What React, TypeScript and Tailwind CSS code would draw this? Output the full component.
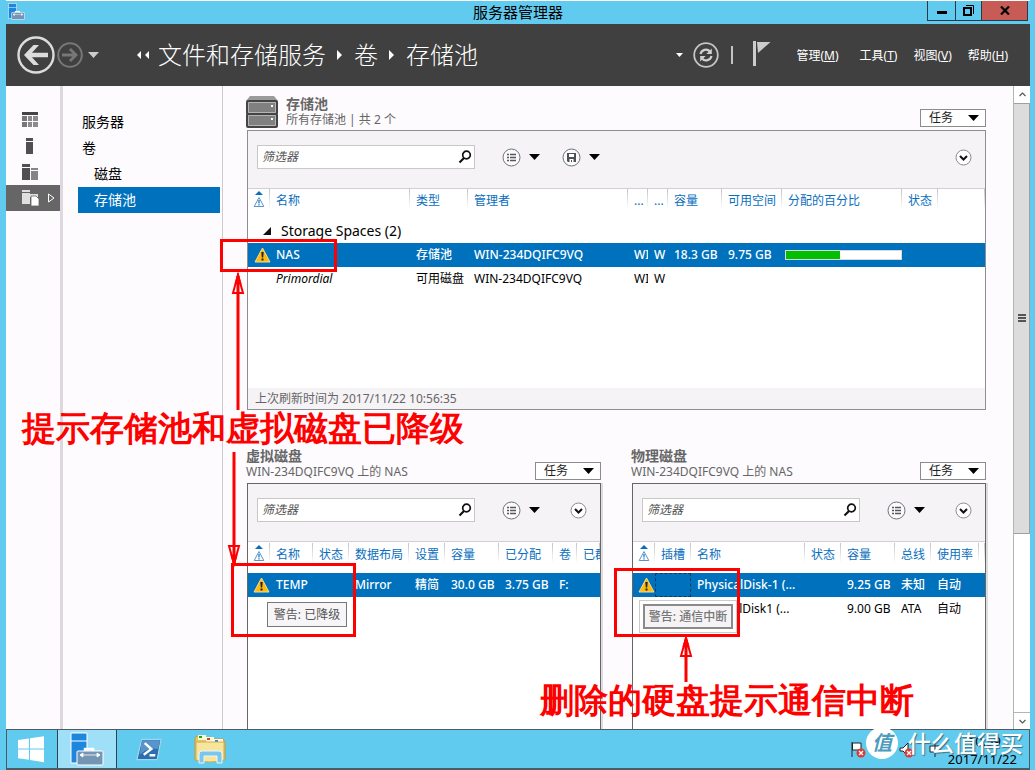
import type { ReactNode } from "react";

const thLine =
  "relative h-[30px] overflow-hidden bg-linear-to-b from-[#c4c4c4] to-white bg-[length:1px_20px] bg-right-top bg-no-repeat pl-[6px] pt-1 text-left align-top font-normal whitespace-nowrap text-[#0a6ebd]";

const Caret = ({ className = "text-black" }: { className?: string }) => (
  <svg width="11" height="6" viewBox="0 0 11 6" className={className} aria-hidden="true">
    <path d="M0 0h11L5.5 6z" fill="currentColor" />
  </svg>
);

const Warning = () => (
  <svg width="17" height="16" viewBox="0 0 17 16" aria-label="警告" className="block">
    <path d="M8.5 1 16 15H1z" fill="#fdb913" stroke="#f8d98a" strokeLinejoin="round" />
    <path d="M7.3 5h2.4l-.5 5.5H7.8zM7.5 11.6h2v2h-2z" fill="#222" />
  </svg>
);

const SortWarning = () => (
  <svg width="12" height="17" viewBox="0 0 12 17" aria-label="状态排序" className="block">
    <path d="M6 0 10 4H2z" fill="#0a6ebd" />
    <path d="M6 6.5 10.8 15.5H1.2z" fill="none" stroke="#5b93c9" />
    <path d="M6 9v3.5M6 13.3v1.2" stroke="#0a6ebd" strokeWidth="1.2" />
  </svg>
);

const ServerIcon = ({ size }: { size: number }) => (
  <svg width={size} height={size} viewBox="0 0 34 34" aria-hidden="true">
    <path d="M1 1h16v30H1z" fill="#1c87dd" stroke="#fff" />
    <path d="M1 9h16" stroke="#fff" />
    <path d="M15 20v-3h8v3" fill="none" stroke="#fff" strokeWidth="2.5" />
    <rect x="7" y="19" width="26" height="14" rx="1" fill="#7495b3" stroke="#fff" />
    <path d="M10 23h20M10 23l3-2v4zM30 23l-3-2v4z" stroke="#fff" fill="#fff" strokeWidth=".8" />
  </svg>
);

const TaskButton = () => (
  <button className="flex h-[18px] w-[66px] items-center justify-between border border-[#8c8c8c] bg-white pr-[6px] pl-2 text-xs text-[#222]">
    任务
    <Caret />
  </button>
);

function Toolbar({ id, save = false }: { id: string; save?: boolean }) {
  return (
    <div className="flex h-[57px] items-start bg-[#f6f3f7] pt-[14px] pr-[13px] pl-[9px]">
      <div className="flex h-6 w-[218px] items-center border border-[#c8c8c8] bg-white pr-[2px] pl-1">
        <input
          id={id}
          aria-label="筛选器"
          placeholder="筛选器"
          className="min-w-0 flex-1 bg-transparent text-xs italic outline-none placeholder:text-[#555]"
        />
        <svg width="14" height="14" viewBox="0 0 14 14" aria-hidden="true">
          <circle cx="8.5" cy="5" r="3.8" fill="none" stroke="#111" strokeWidth="1.7" />
          <path d="M6 8 1.5 12.5" stroke="#111" strokeWidth="2.2" />
        </svg>
      </div>
      <button aria-label="列表选项" className="ml-[27px] flex h-6 items-center gap-2">
        <svg width="19" height="19" viewBox="0 0 19 19">
          <circle cx="9.5" cy="9.5" r="8.5" fill="#fbfafc" stroke="#6f7174" />
          <path d="M5 6.5h2M5 9.5h2M5 12.5h2M8 6.5h6M8 9.5h6M8 12.5h6" stroke="#55585c" strokeWidth="1.7" />
        </svg>
        <Caret />
      </button>
      {save && (
        <button aria-label="保存查询" className="ml-[22px] flex h-6 items-center gap-2">
          <svg width="19" height="19" viewBox="0 0 19 19">
            <circle cx="9.5" cy="9.5" r="8.5" fill="#fbfafc" stroke="#6f7174" />
            <path d="M5 5h9v9H6l-1-1z" fill="#4d5054" />
            <path d="M7 6h5v3H7zM7.5 11h4v3h-4z" fill="#fff" />
            <path d="M9 12h1v2H9z" fill="#4d5054" />
          </svg>
          <Caret />
        </button>
      )}
      <button aria-label="展开" className="ml-auto flex h-6 items-center">
        <svg width="17" height="17" viewBox="0 0 17 17">
          <circle cx="8.5" cy="8.5" r="7.5" fill="#fff" stroke="#8a8a8a" />
          <path d="m5 7 3.5 3.5L12 7" fill="none" stroke="#111" strokeWidth="2" />
        </svg>
      </button>
    </div>
  );
}

function Columns({ heads }: { heads: string[] }) {
  return (
    <thead>
      <tr>
        <th className="h-[30px] bg-linear-to-b from-[#c4c4c4] to-white bg-[length:1px_20px] bg-right-top bg-no-repeat pt-[2px] pl-[5px] align-top">
          <SortWarning />
        </th>
        {heads.map((h, i) => (
          <th key={i} className={thLine}>
            {h}
          </th>
        ))}
      </tr>
    </thead>
  );
}

const Cell = ({ children }: { children?: ReactNode }) => (
  <td className="h-6 overflow-hidden p-0 pl-[6px] whitespace-nowrap">{children}</td>
);

const Widths = ({ list }: { list: string[] }) => (
  <colgroup>
    {list.map((w, i) => (
      <col key={i} className={w} />
    ))}
  </colgroup>
);

function SectionTitle({ title, sub }: { title: string; sub: string }) {
  return (
    <div className="min-w-0 flex-1 text-[#666]">
      <h2 className="text-sm leading-4 font-bold">{title}</h2>
      <p className="text-xs leading-4 whitespace-nowrap">{sub}</p>
    </div>
  );
}

function PoolPanel() {
  return (
    <section>
      <div className="flex h-[34px] items-start">
        <svg width="32" height="34" viewBox="0 0 32 34" className="mr-2" aria-hidden="true">
          <path d="M4 0h24l4 5H0z" fill="#9b9b9b" />
          <rect x="1" y="5" width="30" height="13" rx="1" fill="#808080" stroke="#444" strokeWidth="2" />
          <rect x="1" y="18" width="30" height="13" rx="1" fill="#808080" stroke="#444" strokeWidth="2" />
          <path d="M2.5 6.5h27v10h-27zM2.5 19.5h27v10h-27z" fill="none" stroke="#b5b5b5" />
          <path d="M25 9h2v2h-2zM25 22h2v2h-2z" fill="#fff" />
        </svg>
        <SectionTitle title="存储池" sub="所有存储池 | 共 2 个" />
        <div className="self-end pb-[3px]">
          <TaskButton />
        </div>
      </div>
      <div className="ml-px border border-[#8e8e90] bg-white">
        <Toolbar id="pool-filter" save />
        <div className="h-[200px] border-t border-[#d0d0d0]">
          <table className="w-full table-fixed border-collapse text-xs">
            <Widths
              list={["w-[22px]", "w-[140px]", "w-[58px]", "w-[160px]", "w-[20px]", "w-[20px]", "w-[54px]", "w-[60px]", "w-[120px]", "w-[36px]", ""]}
            />
            <Columns heads={["名称", "类型", "管理者", "...", "...", "容量", "可用空间", "分配的百分比", "状态", ""]} />
            <tbody>
              <tr>
                <td colSpan={11} className="h-6 p-0 text-sm">
                  <div className="flex items-center gap-[10px] pl-[15px]">
                    <svg width="8" height="8" viewBox="0 0 8 8" aria-hidden="true">
                      <path d="M8 0v8H0z" fill="#111" />
                    </svg>
                    Storage Spaces (2)
                  </div>
                </td>
              </tr>
              <tr className="bg-[#0071bd] font-medium text-white">
                <td className="p-0 pl-[6px]">
                  <Warning />
                </td>
                <Cell>NAS</Cell>
                <Cell>存储池</Cell>
                <Cell>WIN-234DQIFC9VQ</Cell>
                <Cell>WI</Cell>
                <Cell>W</Cell>
                <Cell>18.3 GB</Cell>
                <Cell>9.75 GB</Cell>
                <td className="p-0 pl-[3px]">
                  <div role="progressbar" aria-label="分配的百分比" aria-valuenow={47} className="h-[10px] border border-[#d8d8d8] bg-white">
                    <div className="h-full bg-[#00bf00]" style={{ width: "47%" }} />
                  </div>
                </td>
                <Cell />
                <Cell />
              </tr>
              <tr>
                <Cell />
                <Cell>
                  <i>Primordial</i>
                </Cell>
                <Cell>可用磁盘</Cell>
                <Cell>WIN-234DQIFC9VQ</Cell>
                <Cell>WI</Cell>
                <Cell>W</Cell>
              </tr>
            </tbody>
          </table>
        </div>
        <p className="h-[21px] bg-[#f6f3f7] pl-[7px] text-xs leading-[22px] text-[#666]">上次刷新时间为 2017/11/22 10:56:35</p>
      </div>
    </section>
  );
}

function DiskPanel({ title, id, children }: { title: string; id: string; children: ReactNode }) {
  return (
    <section className="flex min-w-0 flex-col">
      <div className="flex items-end">
        <div className="-ml-px flex-1">
          <SectionTitle title={title} sub="WIN-234DQIFC9VQ 上的 NAS" />
        </div>
        <TaskButton />
      </div>
      <div className="mt-[3px] flex-1 border border-b-0 border-[#666] bg-white shadow-[2px_0_0_#ddd]">
        <Toolbar id={id} />
        <div className="relative border-t border-[#d0d0d0]">{children}</div>
      </div>
    </section>
  );
}

function VirtualDisks() {
  return (
    <DiskPanel title="虚拟磁盘" id="virtual-filter">
      <table className="mt-px w-full table-fixed border-collapse text-xs">
        <Widths list={["w-[22px]", "w-[43px]", "w-[36px]", "w-[60px]", "w-[36px]", "w-[54px]", "w-[54px]", "w-[24px]", ""]} />
        <Columns heads={["名称", "状态", "数据布局", "设置", "容量", "已分配", "卷", "已群集"]} />
        <tbody>
          <tr className="bg-[#0071bd] font-medium text-white">
            <td className="p-0 pl-[5px]">
              <Warning />
            </td>
            <Cell>TEMP</Cell>
            <Cell />
            <Cell>Mirror</Cell>
            <Cell>精简</Cell>
            <Cell>30.0 GB</Cell>
            <Cell>3.75 GB</Cell>
            <Cell>F:</Cell>
            <Cell />
          </tr>
        </tbody>
      </table>
      <div role="tooltip" className="absolute top-[60px] left-[19px] flex h-[25px] w-20 items-center justify-center border border-[#777] bg-[#f8f5f9] text-xs whitespace-nowrap text-[#555]">
        警告: 已降级
      </div>
    </DiskPanel>
  );
}

function PhysicalDisks() {
  return (
    <DiskPanel title="物理磁盘" id="physical-filter">
      <table className="mt-px w-full table-fixed border-collapse text-xs">
        <Widths list={["w-[22px]", "w-[36px]", "w-[114px]", "w-[36px]", "w-[54px]", "w-[36px]", "w-[48px]", ""]} />
        <Columns heads={["插槽", "名称", "状态", "容量", "总线", "使用率", ""]} />
        <tbody>
          <tr className="bg-[#0071bd] font-medium text-white">
            <td className="p-0 pl-[5px]">
              <Warning />
            </td>
            <td className="p-0">
              <div className="h-6 border border-dashed border-[#163a5c]" />
            </td>
            <Cell>PhysicalDisk-1 (...</Cell>
            <Cell />
            <Cell>9.25 GB</Cell>
            <Cell>未知</Cell>
            <Cell>自动</Cell>
            <Cell />
          </tr>
          <tr>
            <Cell />
            <Cell />
            <Cell>PhysicalDisk1 (...</Cell>
            <Cell />
            <Cell>9.00 GB</Cell>
            <Cell>ATA</Cell>
            <Cell>自动</Cell>
            <Cell />
          </tr>
        </tbody>
      </table>
      <div role="tooltip" className="absolute top-[58px] left-[6px] border border-[#ccc] bg-white p-[3px]">
        <div className="flex h-[25px] w-[90px] items-center justify-center border-2 border-[#8a8a8a] bg-[#f5f3f6] text-xs font-medium whitespace-nowrap text-[#777]">
          警告: 通信中断
        </div>
      </div>
    </DiskPanel>
  );
}

function TitleBar() {
  return (
    <div className="relative flex h-6 shrink-0 items-start justify-end border-t border-white">
      <div className="absolute top-[2px] left-[2px]">
        <ServerIcon size={17} />
      </div>
      <h1 className="absolute inset-x-0 text-center text-[15px] leading-[22px] text-black">服务器管理器</h1>
      <div className="relative mr-[2px] flex h-5 border border-t-0 border-[#2b3a42] text-black">
        <button aria-label="最小化" className="flex w-7 items-center justify-center border-r border-[#2b3a42]">
          <span className="mt-1 h-[3px] w-[10px] bg-black" />
        </button>
        <button aria-label="还原" className="flex w-[26px] items-center justify-center border-r border-[#2b3a42]">
          <svg width="11" height="11" viewBox="0 0 11 11">
            <path d="M3 .5h7.5V9" fill="none" stroke="#000" />
            <path d="M1 3h7v7H1z" fill="none" stroke="#000" strokeWidth="2" />
          </svg>
        </button>
        <button aria-label="关闭" className="flex w-[45px] items-center justify-center bg-[#c75b55]">
          <svg width="10" height="9" viewBox="0 0 10 9">
            <path d="m1 .5 8 8M9 .5l-8 8" stroke="#000" strokeWidth="2.2" />
          </svg>
        </button>
      </div>
    </div>
  );
}

const menus = [
  { text: "管理", key: "M", gap: "" },
  { text: "工具", key: "T", gap: "ml-[21px]" },
  { text: "视图", key: "V", gap: "ml-4" },
  { text: "帮助", key: "H", gap: "ml-4" },
];

const Chevron = () => (
  <svg width="5" height="10" viewBox="0 0 5 10" aria-hidden="true">
    <path d="M0 0v10l5-5z" fill="#fff" />
  </svg>
);

function Header() {
  return (
    <header className="flex h-[62px] shrink-0 items-center bg-[#404040] pr-[22px] pl-[11px] text-white">
      <button aria-label="后退">
        <svg width="38" height="38" viewBox="0 0 38 38">
          <circle cx="19" cy="19" r="17.5" fill="none" stroke="#dcdcdc" strokeWidth="2.4" />
          <path d="M31 19H10" fill="none" stroke="#dcdcdc" strokeWidth="4.5" />
          <path d="M22 9h-5.500L7 19l9.500 10H22l-9-10z" fill="#dcdcdc" />
        </svg>
      </button>
      <button aria-label="前进" className="ml-[2px]">
        <svg width="26" height="26" viewBox="0 0 26 26">
          <circle cx="13" cy="13" r="11.8" fill="none" stroke="#777" strokeWidth="2" />
          <path d="M5 13h14M13 7l6 6-6 6" fill="none" stroke="#777" strokeWidth="2.8" />
        </svg>
      </button>
      <button aria-label="历史记录" className="ml-[5px]">
        <Caret className="text-[#ccc]" />
      </button>
      <nav aria-label="路径" className="ml-[37px] flex items-center text-2xl font-light whitespace-nowrap">
        <svg width="14" height="8" viewBox="0 0 14 8" aria-hidden="true">
          <path d="M5 0v8L1 4zM13 0v8L9 4z" fill="#fff" />
        </svg>
        <a href="#files" className="ml-2">文件和存储服务</a>
        <span className="mr-3 ml-[11px]"><Chevron /></span>
        <a href="#volumes">卷</a>
        <span className="mr-3 ml-[11px]"><Chevron /></span>
        <a href="#pools">存储池</a>
      </nav>
      <div className="ml-auto flex items-center">
        <svg width="7" height="4" viewBox="0 0 7 4" aria-hidden="true">
          <path d="M0 0h7L3.5 4z" fill="#fff" />
        </svg>
        <button aria-label="刷新" className="ml-[10px]">
          <svg width="26" height="26" viewBox="0 0 26 26">
            <circle cx="13" cy="13" r="11.8" fill="none" stroke="#c4c4c4" strokeWidth="1.8" />
            <path d="M7.5 12a5.5 5.5 0 0 1 9.5-2.5M18.5 14a5.5 5.5 0 0 1-9.5 2.5" fill="none" stroke="#d0d0d0" strokeWidth="2.2" />
            <path d="M18.8 6.500V12h-5.500zM7.200 19.500V14h5.500z" fill="#d0d0d0" />
          </svg>
        </button>
        <span className="ml-3 h-[18px] w-[2px] bg-[#c4c4c4]" />
        <button aria-label="通知" className="ml-5 pb-1">
          <svg width="18" height="25" viewBox="0 0 18 25">
            <path d="M0 0h3v25H0z" fill="#ccc" />
            <path d="M4 1h13.5L9 8.500 5 12z" fill="#ccc" />
          </svg>
        </button>
        <div className="ml-[25px] flex pt-[2px] text-xs whitespace-nowrap">
          {menus.map((m) => (
            <button key={m.key} className={m.gap}>
              {m.text}(<u>{m.key}</u>)
            </button>
          ))}
        </div>
      </div>
    </header>
  );
}

function Sidebar() {
  return (
    <>
      <nav aria-label="工具" className="w-[57px] shrink-0 border-r-[3px] border-[#dcd8de] pt-[21px]">
        <a href="#dashboard" aria-label="仪表板" className="flex h-[26px] items-center pl-4">
          <svg width="16" height="16" viewBox="0 0 16 16">
            <path d="M0 0h16v3H0z" fill="#444" />
            <path d="M0 4h5v5H0zM0 10h5v5H0z" fill="#777" />
            <path d="M6 4h4v5H6zM11 4h5v5h-5zM6 10h4v5H6zM11 10h5v5h-5z" fill="#8c8c8c" />
          </svg>
        </a>
        <a href="#local" aria-label="本地服务器" className="flex h-[26px] items-center pl-5">
          <svg width="7" height="16" viewBox="0 0 7 16">
            <path d="M0 0h7v3H0zM0 4h7v12H0z" fill="#505050" />
          </svg>
        </a>
        <a href="#all" aria-label="所有服务器" className="flex h-[26px] items-center pl-4">
          <svg width="16" height="16" viewBox="0 0 16 16">
            <path d="M0 0h8v3H0zM0 4h8v12H0z" fill="#505050" />
            <path d="M9 4h7v2H9zM9 7h7v9H9z" fill="#858585" />
          </svg>
        </a>
        <a href="#storage" aria-label="文件和存储服务" className="flex h-[26px] items-center justify-between bg-[#656665] pr-[5px] pl-4">
          <svg width="17" height="16" viewBox="0 0 17 16">
            <path d="M0 0h8v2H0zM0 3h8v1h8v3H8v7H0z" fill="#e0e0e0" />
            <path d="M9 6h5l3 3v7H9z" fill="#fff" stroke="#656665" strokeWidth=".8" />
          </svg>
          <svg width="7" height="10" viewBox="0 0 7 10">
            <path d="M.5 1v8L6 5z" fill="none" stroke="#fff" />
          </svg>
        </a>
      </nav>
      <nav aria-label="卷导航" className="flex w-40 shrink-0 flex-col border-r border-[#ccc] pt-[23px] pr-[2px] pl-[15px] text-sm text-black">
        <a href="#servers" className="flex h-[26px] items-center pl-1">服务器</a>
        <a href="#volumes" className="flex h-[26px] items-center pl-1">卷</a>
        <a href="#disks" className="flex h-[26px] items-center pl-4">磁盘</a>
        <a href="#pools" className="flex h-[26px] items-center bg-[#0071bd] pl-4 text-white">存储池</a>
      </nav>
    </>
  );
}

function Scrollbar() {
  return (
    <div className="flex w-[17px] shrink-0 flex-col border-l border-[#b4b4b4] bg-white" aria-hidden="true">
      <div className="flex h-[17px] shrink-0 items-center justify-center">
        <svg width="7" height="5" viewBox="0 0 7 5"><path d="m.5 4 3-3 3 3" fill="none" stroke="#555" strokeWidth="1.2" /></svg>
      </div>
      <div className="flex h-[67%] flex-col items-center justify-center gap-px border border-l-0 border-[#a0a0a0] bg-[#dcdcdc]">
        <span className="h-[2px] w-2 bg-[#555]" />
        <span className="h-[2px] w-2 bg-[#555]" />
        <span className="h-[2px] w-2 bg-[#555]" />
      </div>
      <div className="mt-auto flex h-[17px] shrink-0 items-center justify-center border-t border-[#b4b4b4]">
        <svg width="7" height="5" viewBox="0 0 7 5"><path d="m.5 1 3 3 3-3" fill="none" stroke="#555" strokeWidth="1.2" /></svg>
      </div>
    </div>
  );
}

function Taskbar() {
  return (
    <footer className="flex h-[41px] shrink-0 items-stretch border border-b-2 border-[#4c5c64]">
      <button aria-label="开始" className="flex w-[50px] items-center justify-center pr-[2px]">
        <svg width="28" height="27" viewBox="0 0 28 27">
          <path d="M1 4 12 2.400V12.500H1zM13 2.200 27 .300V12.500H13zM1 13.500h11v10.300L1 22.200zM13 13.500h14v12.700L13 24z" fill="#fff" />
        </svg>
      </button>
      <button aria-label="服务器管理器" className="flex w-[60px] items-center justify-center border-x border-[#30424c] bg-[#9fdff8]">
        <ServerIcon size={34} />
      </button>
      <button aria-label="PowerShell" className="ml-[19px] flex w-[26px] items-center justify-center">
        <svg width="27" height="23" viewBox="0 0 27 23">
          <path d="M6 1h20l-4 21H1z" fill="#2b6fae" stroke="#b7dff5" strokeLinejoin="round" />
          <path d="M6 2h19l-2 9C15 9 9 12 4 17z" fill="#5795ca" />
          <path d="m9 5 7 6-8 6M14 17.500h6" fill="none" stroke="#fff" strokeWidth="2.4" />
        </svg>
      </button>
      <button aria-label="文件资源管理器" className="ml-8 flex w-8 items-center justify-center">
        <svg width="32" height="30" viewBox="0 0 32 30">
          <path d="M1 4 3 2h8l2 3h16l2 3v18H1z" fill="#e5c760" stroke="#c49a3c" />
          <path d="M4 1h8v5H4zM12 3h8v5h-8zM20 5h9v5h-9z" fill="#fff8d6" />
          <path d="M5 2h3v2H5z" fill="#18a818" />
          <path d="M13 4h3v2h-3z" fill="#d84020" />
          <path d="M21 6h3v2h-3z" fill="#2f86d8" />
          <path d="M2 8h28v18q-14 4-28 0z" fill="#f7e59b" stroke="#d0ac52" />
          <path d="M5 29v-9q0-3 3-3h17q3 0 3 3v9h-5v-7H10v7z" fill="#7cc6ec" stroke="#e8f7ff" />
        </svg>
      </button>
      <div className="ml-auto flex items-center pr-3">
        <svg width="100" height="20" viewBox="0 0 100 20" aria-hidden="true">
          <path d="M4 3v15M4.5 4H13v7H4.500z" stroke="#222" fill="#fff" />
          <circle cx="13" cy="14" r="4.5" fill="#d93a32" />
          <path d="m11 12 4 4M15 12l-4 4" stroke="#fff" strokeWidth="1.3" />
          <path d="M52 9h3l5-5v13l-5-5h-3z" stroke="#222" fill="#fff" />
          <circle cx="61" cy="14" r="4.5" fill="#d93a32" />
          <path d="m59 12 4 4M63 12l-4 4" stroke="#fff" strokeWidth="1.3" />
          <path d="M82 7h10v6H82zM87 3v15" stroke="#222" fill="#fff" />
        </svg>
        <div className="pt-px text-right text-[13px] leading-[18px] text-black">
          <div className="pr-4">10:59</div>
          <div>2017/11/22</div>
        </div>
      </div>
    </footer>
  );
}

// red mark-up and site badge lying over the window
function Annotations() {
  return (
    <div className="pointer-events-none absolute inset-0 overflow-hidden">
      <svg width="1035" height="770" viewBox="0 0 1035 770" className="absolute top-0 left-0" fill="none" stroke="#f00" strokeWidth="3" aria-hidden="true">
        <path d="M221.5 240.5h114v30h-114zM232.5 564.5h122v71h-122zM615.5 569.5h123v66h-123z" />
        <path d="M238 410V276M234 452v112M686 682v-42" />
        <path d="m238 275-5 18h10zM234 564l-5-18h10zM686 638l-5 18h10z" strokeWidth="2" />
        <path d="m238 273-3 11h6zM234 566l-3-11h6zM686 636l-3 11h6z" fill="#f00" strokeWidth="1" />
      </svg>
      <p className="absolute top-[409px] left-[22px] font-serif text-[34px] leading-10 font-bold whitespace-nowrap text-[#f00]">提示存储池和虚拟磁盘已降级</p>
      <p className="absolute top-[681px] left-[540px] font-serif text-[34px] leading-10 font-bold whitespace-nowrap text-[#f00]">删除的硬盘提示通信中断</p>
      <div className="absolute right-3 bottom-[10px] flex items-center gap-[10px] text-white">
        <span className="flex size-8 items-center justify-center rounded-full bg-white text-xl font-bold text-[#4c9dbd] italic">值</span>
        <span className="text-[23px] font-medium whitespace-nowrap [text-shadow:1px_1px_1px_#3c7187]">什么值得买</span>
      </div>
    </div>
  );
}

export default function App() {
  return (
    <div className="relative flex h-screen flex-col overflow-hidden bg-[#61cbef] pr-[5px] pl-[6px] font-['Noto_Sans','Noto_Sans_CJK_SC',sans-serif]">
      <TitleBar />
      <Header />
      <div className="flex min-h-0 flex-1 bg-[#fdfbfe]">
        <Sidebar />
        <main className="flex min-w-0 flex-1 flex-col overflow-hidden pt-[10px] pr-[27px] pl-[23px]">
          <PoolPanel />
          <div className="mt-[38px] ml-px grid flex-1 grid-cols-2 gap-[31px]">
            <VirtualDisks />
            <PhysicalDisks />
          </div>
        </main>
        <Scrollbar />
      </div>
      <Taskbar />
      <Annotations />
    </div>
  );
}
